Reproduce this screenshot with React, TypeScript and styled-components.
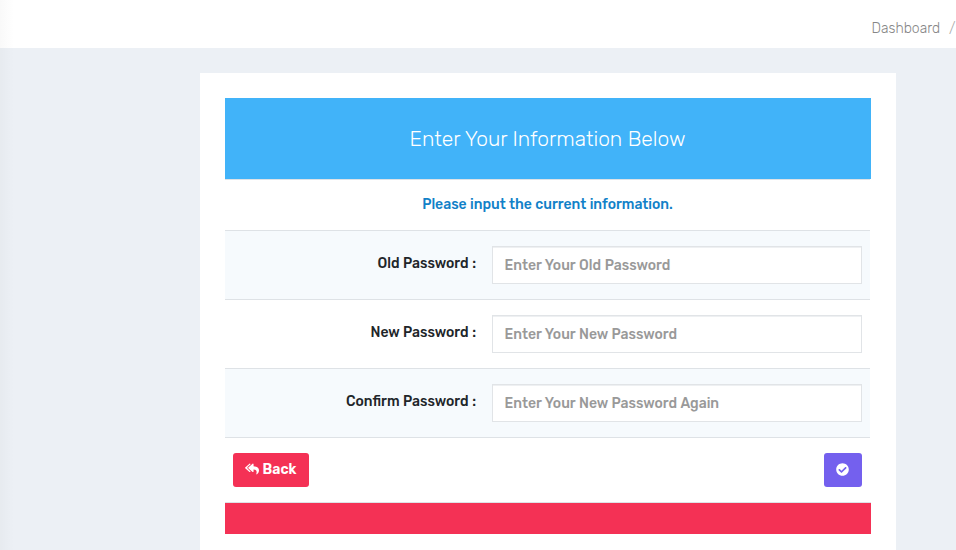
import React from "react";
import styled, { createGlobalStyle } from "styled-components";
import { FaReplyAll, FaCheckCircle } from "react-icons/fa";

const GlobalStyle = createGlobalStyle`
  * { box-sizing: border-box; }
  html, body { margin: 0; height: 100%; overflow: hidden; }
  body { background: #ecf0f5; font-family: Rubik, Roboto, sans-serif; font-size: 14px; color: #212529; }
`;

const Page = styled.div`
  height: 550px;
  overflow: hidden;
  background: linear-gradient(90deg, rgba(0, 0, 0, 0.025), rgba(0, 0, 0, 0) 14px);
`;

const TopBar = styled.header`
  height: 48px;
  display: flex;
  justify-content: flex-end;
  padding: 18px 0 0;
  background: linear-gradient(90deg, #f9f9f9, #fff 14px);
  font-weight: 300;
  line-height: 22px;
  color: #868686;
`;

const Separator = styled.span`
  padding-left: 9px;
  width: 16px;
  color: #aaa;
`;

const Card = styled.main`
  width: 696px;
  margin: 25px 0 0 200px;
  padding: 25px;
  height: 520px;
  background: #fff;
`;

const Banner = styled.h1`
  margin: 0;
  padding-right: 1px;
  height: 81px;
  display: flex;
  align-items: center;
  justify-content: center;
  background: #41b3f9;
  color: #fff;
  font-size: 21px;
  font-weight: 300;
`;

const Hint = styled.p`
  margin: 0;
  height: 51px;
  width: 645px;
  border-top: 1px solid #dee2e6;
  text-align: center;
  line-height: 50px;
  font-weight: 500;
  word-spacing: 0.2px;
  color: #1181c8;
`;

const Row = styled.div<{ $striped?: boolean }>`
  width: 645px;
  height: 69px;
  border-top: 1px solid #dee2e6;
  padding: 15px 8px;
  display: grid;
  grid-template-columns: 243px 370px;
  column-gap: 16px;
  background: ${(p) => (p.$striped ? "#f6fafd" : "#fff")};
`;

const Label = styled.label`
  text-align: right;
  line-height: 36px;
  font-weight: 500;
  word-spacing: 0.3px;
`;

const Input = styled.input`
  height: 38px;
  width: 370px;
  border: 1px solid #e1e4e7;
  border-radius: 0;
  padding: 0 12px 0 11.6px;
  background: #fff;
  box-shadow: inset 0 1px 0 #eef0f2;
  font: 500 14px Rubik, Roboto, sans-serif;
  word-spacing: 0.4px;
  outline: none;
  &::placeholder { color: #999; opacity: 1; }
`;

const Actions = styled.div`
  width: 645px;
  height: 65px;
  border-top: 1px solid #dee2e6;
  padding: 15px 8px;
  display: flex;
  justify-content: space-between;
`;

const Button = styled.button<{ $color: string; $width: number }>`
  width: ${(p) => p.$width}px;
  height: 34px;
  border: 0;
  border-radius: 3px;
  padding: 0 1px 2px 0;
  display: flex;
  align-items: center;
  justify-content: center;
  gap: 4px;
  background: ${(p) => p.$color};
  color: #fff;
  font: 600 14px Rubik, Roboto, sans-serif;
`;

const Footer = styled.div`
  height: 32px;
  border-top: 1px solid #dee2e6;
  background: #f43155;
`;

const fields = [
  { label: "Old Password :", hint: "Enter Your Old Password" },
  { label: "New Password :", hint: "Enter Your New Password" },
  { label: "Confirm Password :", hint: "Enter Your New Password Again" },
];

export default function App() {
  return (
    <Page>
      <GlobalStyle />
      <TopBar>
        <span>Dashboard</span>
        <Separator>/</Separator>
      </TopBar>
      <Card>
        <Banner>Enter Your Information Below</Banner>
        <Hint>Please input the current information.</Hint>
        {fields.map((f, i) => (
          <Row key={f.label} $striped={i % 2 === 0}>
            <Label htmlFor={`field-${i}`}>{f.label}</Label>
            <Input id={`field-${i}`} type="text" placeholder={f.hint} />
          </Row>
        ))}
        <Actions>
          <Button type="button" $color="#f43155" $width={76}>
            <FaReplyAll size={14} />
            Back
          </Button>
          <Button type="button" $color="#7460ee" $width={38} aria-label="Save">
            <FaCheckCircle size={13} />
          </Button>
        </Actions>
        <Footer />
      </Card>
    </Page>
  );
}
